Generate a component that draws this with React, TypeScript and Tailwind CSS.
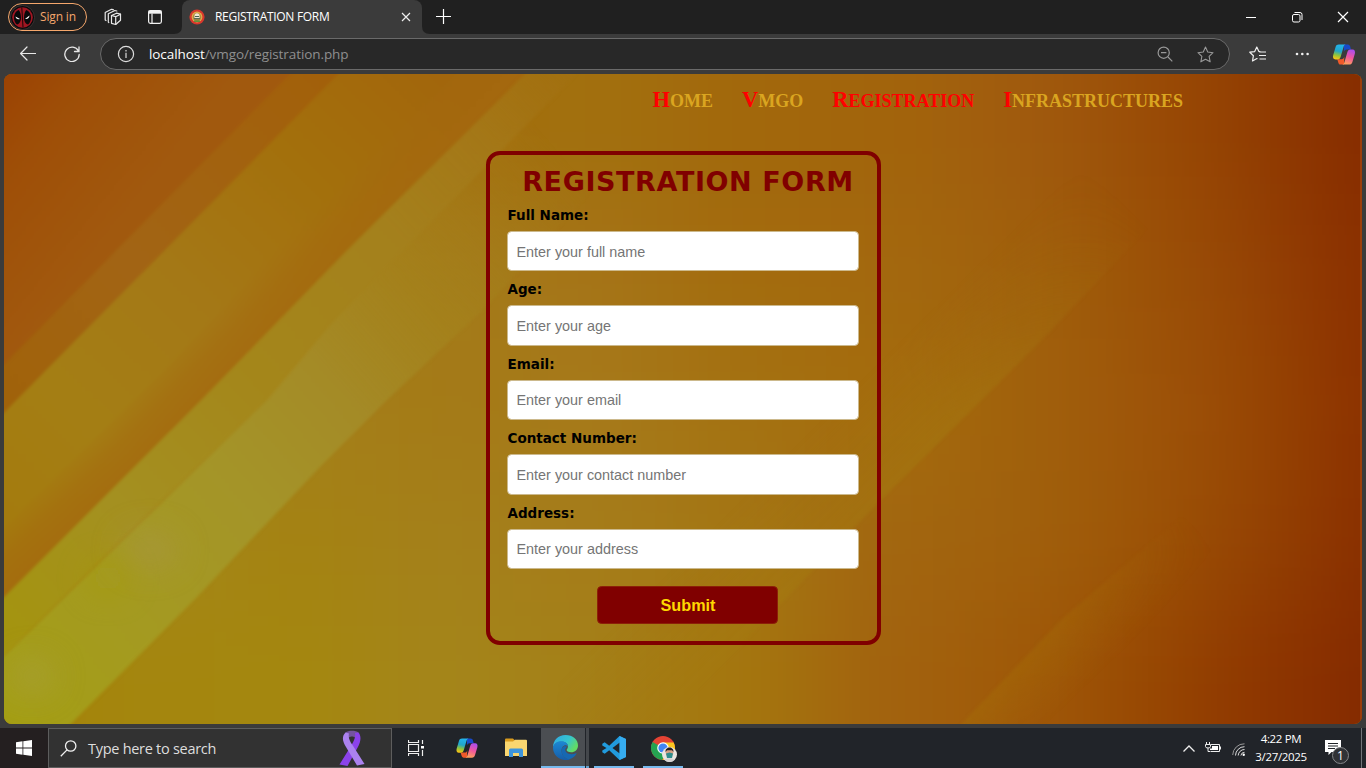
import React from "react";

const columns = [0, 140, 290, 440, 590, 740, 890, 1040, 1150, 1240, 1320, 1400];
const meshRows = [
  ["#9b4204", "#a0560a", "#a4660c", "#a36e0c", "#a2700e", "#a2680c", "#a2640c", "#a05a0e", "#9a4c06", "#934002", "#8a3200", "#842800"],
  ["#9e4c06", "#a26a10", "#a47612", "#a47c1a", "#a57418", "#a36c0e", "#a3680e", "#a0600c", "#9c5206", "#964606", "#8f3600", "#882c00"],
  ["#a2700e", "#a47e16", "#a4801c", "#a47a16", "#a67a1a", "#a47212", "#a46c0c", "#a0600c", "#9e540a", "#994a04", "#923a00", "#882c00"],
  ["#a38812", "#a4881c", "#a48212", "#a4801a", "#a57c1a", "#a47614", "#a26610", "#a0600c", "#9d5406", "#964604", "#8f3800", "#862a00"],
  ["#a38208", "#a4860e", "#a4870f", "#a4851a", "#a48018", "#a4760e", "#a2620e", "#9f5808", "#984802", "#8f3800", "#8a3000", "#802600"],
];

function Backdrop() {
  return (
    <svg className="absolute inset-0 h-full w-full" viewBox="4 74 1358 650" preserveAspectRatio="none">
      <defs>
        <filter id="mesh" x="-20%" y="-20%" width="140%" height="140%" colorInterpolationFilters="sRGB"><feGaussianBlur stdDeviation="50" /></filter>
        <filter id="soft" x="-5%" y="-5%" width="110%" height="110%" colorInterpolationFilters="sRGB"><feGaussianBlur stdDeviation="1.600" /></filter>
        <filter id="glow" x="-100%" y="-100%" width="300%" height="300%"><feGaussianBlur stdDeviation="16" /></filter>
        <linearGradient id="corner" gradientUnits="userSpaceOnUse" x1="4" y1="74" x2="150" y2="190">
          <stop stopColor="#9b4203" /><stop offset=".35" stopColor="#9e4e07" /><stop offset="1" stopColor="#a1590e" />
        </linearGradient>
        <linearGradient id="bandB" gradientUnits="userSpaceOnUse" x1="0" y1="390" x2="320" y2="74">
          <stop stopColor="#a0620a" /><stop offset=".4" stopColor="#a26414" /><stop offset="1" stopColor="#a2600a" />
        </linearGradient>
        <linearGradient id="bandC" gradientUnits="userSpaceOnUse" x1="0" y1="560" x2="450" y2="90">
          <stop stopColor="#a47a0c" /><stop offset=".25" stopColor="#a47e14" /><stop offset=".5" stopColor="#a47816" /><stop offset=".75" stopColor="#a3700c" /><stop offset="1" stopColor="#a2660c" />
        </linearGradient>
        <linearGradient id="rim" gradientUnits="userSpaceOnUse" x1="300" y1="301" x2="262" y2="263">
          <stop stopColor="#a4680e" stopOpacity=".75" /><stop offset=".5" stopColor="#a4680e" stopOpacity=".5" /><stop offset="1" stopColor="#a46a10" stopOpacity="0" />
        </linearGradient>
        <linearGradient id="bandD" gradientUnits="userSpaceOnUse" x1="0" y1="640" x2="640" y2="50">
          <stop stopColor="#a4940e" /><stop offset=".2" stopColor="#a49020" /><stop offset=".42" stopColor="#a4861a" /><stop offset=".65" stopColor="#a4801c" /><stop offset=".8" stopColor="#a47818" stopOpacity=".9" /><stop offset="1" stopColor="#a26c0e" stopOpacity=".2" />
        </linearGradient>
        <linearGradient id="bandE" gradientUnits="userSpaceOnUse" x1="0" y1="720" x2="600" y2="200">
          <stop stopColor="#a49e14" /><stop offset=".2" stopColor="#a49a20" /><stop offset=".42" stopColor="#a49428" /><stop offset=".6" stopColor="#a48a26" /><stop offset=".75" stopColor="#a4821c" stopOpacity=".8" /><stop offset="1" stopColor="#a47a1a" stopOpacity="0" />
        </linearGradient>
        <linearGradient id="crease" gradientUnits="userSpaceOnUse" x1="1040" y1="342" x2="970" y2="272">
          <stop stopColor="#a47a10" stopOpacity=".5" /><stop offset="1" stopColor="#a47812" stopOpacity="0" />
        </linearGradient>
        <linearGradient id="creaseFade" gradientUnits="userSpaceOnUse" x1="660" y1="724" x2="1150" y2="228">
          <stop stopColor="#fff" /><stop offset=".6" stopColor="#fff" /><stop offset="1" stopColor="#000" />
        </linearGradient>
        <mask id="creaseMask"><rect width="1366" height="768" fill="url(#creaseFade)" /></mask>
        <linearGradient id="ray" gradientUnits="userSpaceOnUse" x1="1020" y1="664" x2="1062" y2="708">
          <stop stopColor="#a46c08" stopOpacity=".55" /><stop offset="1" stopColor="#a46808" stopOpacity="0" />
        </linearGradient>
        <linearGradient id="rayFade" gradientUnits="userSpaceOnUse" x1="960" y1="724" x2="1190" y2="520">
          <stop stopColor="#fff" /><stop offset=".4" stopColor="#bbb" /><stop offset="1" stopColor="#000" />
        </linearGradient>
        <mask id="rayMask"><rect width="1366" height="768" fill="url(#rayFade)" /></mask>
      </defs>
      <rect x="0" y="70" width="1370" height="660" fill="#a06a10" />
      <g filter="url(#mesh)">
        {meshRows.map((row, r) =>
          row.map((fill, c) => {
            const left = c === 0 ? -200 : (columns[c - 1] + columns[c]) / 2;
            const right = c === 11 ? 1600 : (columns[c] + columns[c + 1]) / 2;
            const top = r === 0 ? -100 : 80 + r * 130;
            return <rect key={`${r}-${c}`} x={left} y={top} width={right - left + 1} height={r === 4 ? 400 : r === 0 ? 311 : 131} fill={fill} />;
          })
        )}
      </g>
      <g filter="url(#soft)">
        <polygon points="-20,680 267,400 330,325 586,50 720,50 486,307 387,400 320,467 197,597 40,755 -20,755" fill="url(#bandE)" />
        <polygon points="-20,621 203,398 350,247 549,50 600,50 330,325 267,400 110,550 -20,680" fill="url(#bandD)" />
        <polygon points="-20,421 143,272 362,50 549,50 350,247 203,398 -20,621" fill="url(#bandC)" />
        <polygon points="-20,551 165,370 310,215 475,50 549,50 350,247 203,398 -20,621" fill="url(#rim)" />
        <polygon points="-20,389 143,223 314,50 362,50 143,272 -20,437" fill="url(#bandB)" />
        <polygon points="-20,389 143,223 314,50 -20,50" fill="url(#corner)" />
        <polygon points="650,736 740,646 880,501 1040,342 1147,229 1250,130 1100,130 560,670 560,736" fill="url(#crease)" mask="url(#creaseMask)" />
        <polygon points="950,736 1063,618 1180,518 1230,530 1050,736" fill="url(#ray)" mask="url(#rayMask)" />
      </g>
      <ellipse cx="150" cy="550" rx="28" ry="18" fill="#a8964a" opacity=".55" filter="url(#glow)" />
      <ellipse cx="32" cy="676" rx="22" ry="18" fill="#a8a040" opacity=".6" filter="url(#glow)" />
      <ellipse cx="108" cy="578" rx="20" ry="16" fill="#a49a08" opacity=".6" filter="url(#glow)" />
      <rect x="1360" y="74" width="2" height="650" fill="#a64a12" opacity=".6" />
    </svg>
  );
}

function CopilotIcon({ className }: { className: string }) {
  return (
    <svg className={className} viewBox="0 0 24 24">
      <defs>
        <linearGradient id="cpA" x1=".5" y1="0" x2=".3" y2="1"><stop stopColor="#23b4ee" /><stop offset=".45" stopColor="#22a6c8" /><stop offset=".72" stopColor="#8fc43c" /><stop offset="1" stopColor="#ffc513" /></linearGradient>
        <linearGradient id="cpB" x1=".7" y1="0" x2=".4" y2="1"><stop stopColor="#a94df0" /><stop offset=".5" stopColor="#f0569e" /><stop offset="1" stopColor="#ffa05a" /></linearGradient>
      </defs>
      <path d="M12 1.500h4c1.400 0 2 .8 2.400 2l.9 3.200h-4.400c-2 0-2.500 1-3 2.600z" fill="#1749c9" />
      <path d="M12 22.500H8.500c-1.400 0-2-.8-2.400-2L5 17h4.300c2 0 2.500-1 3-2.600z" fill="#f05a2a" />
      <path d="M6.600 1.500h7.400c-1.500 0-2.100 1.300-2.500 2.600L8.600 14c-.6 2-1.400 3.200-3.300 3.200H3.200C.8 17.200.1 15 .7 12.800L3.300 4c.5-1.700 1.500-2.500 3.300-2.500z" fill="url(#cpA)" />
      <path d="M17.400 22.500H10c1.500 0 2.100-1.300 2.500-2.600l2.900-9.900c.6-2 1.400-3.200 3.300-3.200h2.100c2.400 0 3.100 2.200 2.500 4.400L20.700 20c-.5 1.700-1.500 2.500-3.300 2.500z" fill="url(#cpB)" />
    </svg>
  );
}

function TitleBar() {
  return (
    <div className="flex h-[34px] items-stretch bg-[#202020] text-white">
      <div className="ml-2 mt-[3px] flex h-7 w-[79px] items-center rounded-full border border-[#f5a76c] text-[#f5a76c]">
        <svg className="ml-[1px] h-[25px] w-[25px]" viewBox="0 0 25 25">
          <circle cx="12.500" cy="12.500" r="12" fill="#0a0a0c" stroke="#4a4040" strokeWidth=".7" />
          <circle cx="12.500" cy="12.500" r="10.300" fill="#a01622" />
          <path d="M8.800 5C10.500 7 11 10 11 13s-1.500 6-4 6.500C5 18 4 15.500 4 12.500 4 9 6 6 8.800 5zM16.200 5C14.500 7 14 10 14 13s1.500 6 4 6.500c2-1.500 3-4 3-7 0-3.500-2-6.500-4.800-7.500z" fill="#09090b" />
          <path d="M11.300 2.500l1-.2 1.200 20-1 .2z" fill="#180808" />
          <path d="M5.500 11.500l4.500 2.400c-2.300.8-4 .1-4.500-2.400zM19.500 10.500L15 13.900c2.500.6 4.300-.8 4.500-3.400z" fill="#fff" />
        </svg>
        <span className="ml-[5px] whitespace-nowrap font-['Open_Sans',sans-serif] text-[12px] leading-4 tracking-[-0.15px]">Sign in</span>
      </div>
      <svg className="ml-[17px] mt-2 h-[18px] w-[18px]" viewBox="0 0 18 18" fill="none" stroke="#e8e8e8" strokeWidth="1.200" strokeLinejoin="round" strokeLinecap="round">
        <path d="M7.500 7.500l5-2.300 4 1v6l-4.800 4.300-4.200-1.200zM4.800 14.500l-.5-.4V5.800L10.800 2.500l2 .5M2 12.500l-.8-.5V4.500L7.500 1.300l1.800.4" />
        <path d="M7.500 7.500l4.200 1.200v7.800M11.700 8.700l4.800-2.500" />
      </svg>
      <svg className="ml-[25px] mt-[9px] h-4 w-4" viewBox="0 0 16 16" fill="none" stroke="#f2f2f2" strokeWidth="1.200">
        <rect x="1.600" y="1.600" width="12.800" height="12.800" rx="1.800" />
        <path d="M1.500 3.200h13" strokeWidth="3" />
        <path d="M5 4.500v10" />
      </svg>
      <svg className="ml-[11px] h-[34px] w-2" viewBox="0 0 8 34"><path d="M0 34q8 0 8-8v8z" fill="#3b3b3b" /></svg>
      <div className="flex w-[240px] items-center rounded-t-lg bg-[#3b3b3b] pl-2">
        <svg className="-ml-px h-4 w-4" viewBox="0 0 16 16">
          <circle cx="8" cy="8" r="7.600" fill="#d8382c" /><circle cx="8" cy="8" r="5.400" fill="#e4b04c" />
          <circle cx="8" cy="8" r="4.300" fill="#a98a45" /><path d="M5.500 6.800a2.500 2.500 0 015 0v2.500h-5z" fill="#f0e6d4" />
          <path d="M6 7.500h4M5 9.700h6" stroke="#466050" /><path d="M5 12.200h6" stroke="#5b8f3a" strokeWidth="1.500" />
        </svg>
        <span className="ml-[10px] w-[181px] whitespace-nowrap font-['Open_Sans',sans-serif] text-[12px] leading-4 tracking-[-0.3px]">REGISTRATION FORM</span>
        <svg className="ml-[5px] h-[10px] w-[10px]" viewBox="0 0 10 10" stroke="#eee" strokeWidth="1.200"><path d="M1 1l8 8M9 1L1 9" /></svg>
      </div>
      <svg className="h-[34px] w-2" viewBox="0 0 8 34"><path d="M8 34q-8 0-8-8v8z" fill="#3b3b3b" /></svg>
      <svg className="ml-[6px] mt-[9px] h-[15px] w-[15px]" viewBox="0 0 15 15" stroke="#fff" strokeWidth="1.200"><path d="M7.500 0v15M0 7.500h15" /></svg>
      <div className="ml-auto mr-[17px] flex items-center gap-[34px]">
        <svg className="h-3 w-3" viewBox="0 0 12 12" stroke="#fff"><path d="M1 6.500h10" /></svg>
        <svg className="h-3 w-3" viewBox="0 0 12 12" stroke="#fff" fill="none"><rect x="1.500" y="3.500" width="7.500" height="7.500" rx="1.500" /><path d="M3.500 1.500H9a2 2 0 012 2V9" /></svg>
        <svg className="h-3 w-3" viewBox="0 0 12 12" stroke="#fff" strokeWidth="1.200"><path d="M1 1l10 10M11 1L1 11" /></svg>
      </div>
    </div>
  );
}

const starPath = "M8 1l2.100 4.700 5 .6-3.700 3.500 1 5.100L8 12.400l-4.400 2.500 1-5.100L.9 6.300l5-.6z";

function AddressBar() {
  return (
    <div className="flex h-10 items-center bg-[#3b3b3b]">
      <svg className="ml-5 h-4 w-4" viewBox="0 0 16 16" fill="none" stroke="#e8e8e8" strokeWidth="1.200" strokeLinecap="round" strokeLinejoin="round"><path d="M15.500 7.500H.8M7 1L.6 7.500 7 14" /></svg>
      <svg className="ml-7 h-4 w-4" viewBox="0 0 16 16" fill="none" stroke="#e8e8e8" strokeWidth="1.300" strokeLinecap="round"><path d="M14.400 5A7.200 7.200 0 1015.200 8.500M15 1v4.500h-4.500" /></svg>
      <div className="ml-5 flex h-8 w-[1130px] items-center rounded-full border border-[#6a6a6a] bg-[#282828]">
        <svg className="ml-4 h-[18px] w-[18px]" viewBox="0 0 18 18" fill="none" stroke="#ddd" strokeWidth="1.200"><circle cx="9" cy="9" r="7.600" /><path d="M9 7.800V13M9 5v1.400" /></svg>
        <span className="ml-[14px] whitespace-nowrap font-['Open_Sans',sans-serif] text-[13.500px] leading-5 tracking-[-0.09px] text-[#8f8f8f]"><span className="text-white">localhost</span>/vmgo/registration.php</span>
        <svg className="ml-auto h-4 w-4" viewBox="0 0 16 16" fill="none" stroke="#999" strokeWidth="1.200"><circle cx="6.700" cy="6.700" r="5.600" /><path d="M4 6.700h5.400M11 11l4.300 4.300" /></svg>
        <svg className="ml-6 mr-[15px] h-[17px] w-[17px]" viewBox="0 0 16 16" fill="none" stroke="#999" strokeLinejoin="round"><path d={starPath} /></svg>
      </div>
      <svg className="ml-[19px] h-[17px] w-[17px]" viewBox="0 0 17 17" fill="none" stroke="#f0f0f0" strokeWidth="1.200" strokeLinejoin="round"><path d="M11.300 5.700L9.900 5.500 7.800 1 5.700 5.600.8 6.200 4.400 9.700l-.9 5.300 4.400-2.500.6.300M10 6h7M10 9.500h7M10.500 13H17" /></svg>
      <svg className="ml-7 h-4 w-4" viewBox="0 0 16 16" fill="#f0f0f0"><circle cx="3" cy="8" r="1.300" /><circle cx="8.300" cy="8" r="1.300" /><circle cx="13.600" cy="8" r="1.300" /></svg>
      <CopilotIcon className="ml-[22px] h-[23px] w-6" />
    </div>
  );
}

const fields = [
  ["Full Name:", "Enter your full name"],
  ["Age:", "Enter your age"],
  ["Email:", "Enter your email"],
  ["Contact Number:", "Enter your contact number"],
  ["Address:", "Enter your address"],
];

function NavLink({ initial, rest, active }: { initial: string; rest: string; active?: boolean }) {
  return (
    <a className={active ? "whitespace-nowrap text-[#ff0000]" : "whitespace-nowrap text-[#daa520]"}>
      <span className="text-[22.500px] text-[#ff0000]">{initial}</span>
      <span className="text-[25.200px] [font-variant:small-caps]">{rest}</span>
    </a>
  );
}

function Page() {
  return (
    <main className="relative mx-1 h-[650px] overflow-hidden rounded-lg">
      <Backdrop />
      <div className="relative">
        <nav className="flex h-[77px] items-start justify-end gap-[29px] pr-[179px] pt-[9px] font-['Liberation_Serif',serif] font-bold leading-8">
          <NavLink initial="H" rest="ome" />
          <NavLink initial="V" rest="mgo" />
          <NavLink initial="R" rest="egistration" active />
          <NavLink initial="I" rest="nfrastructures" />
        </nav>
        <form className="ml-[482px] h-[494px] w-[394.500px] rounded-[14px] border-4 border-[#800000] px-[17px] pt-[10px]">
          <h1 className="h-9 w-[362px] whitespace-nowrap text-center font-['DejaVu_Sans',sans-serif] text-[27px] font-bold leading-[34px] tracking-[0.6px] text-[#800000]">REGISTRATION FORM</h1>
          {fields.map(([label, hint]) => (
            <div key={label} className="h-[74.400px] pt-[5px]">
              <label className="block h-[25px] whitespace-nowrap pl-[0.500px] font-['DejaVu_Sans',sans-serif] text-[13.500px] font-bold leading-[18px] text-black">{label}</label>
              <input className="block h-[40.400px] w-[352px] rounded-[4.500px] border border-[#ccb98c] bg-white px-[8.500px] pt-px font-['Liberation_Sans',sans-serif] text-[14.400px] placeholder:text-[#757575]" placeholder={hint} />
            </div>
          ))}
          <button type="button" className="ml-[90px] mt-[13px] block h-[38px] w-[181px] rounded-[4.500px] border border-[#8c2008] bg-[#800000] pl-px font-['Liberation_Sans',sans-serif] text-[16.200px] font-bold text-[#ffd700]">Submit</button>
        </form>
      </div>
    </main>
  );
}

function Taskbar() {
  return (
    <footer className="flex h-10 items-stretch bg-[#212429] text-white">
      <div className="flex w-12 items-center justify-center bg-[#241f20]">
        <svg className="h-4 w-4" viewBox="0 0 16 16" fill="#fff"><path d="M0 2.200L6.500 1.300v6.300H0zM7.300 1.200L16 0v7.600H7.300zM0 8.400h6.500v6.300L0 13.800zM7.300 8.400H16V16l-8.700-1.200z" /></svg>
      </div>
      <div className="flex w-[344px] items-center border border-[#5d5d5d] bg-[#323232]">
        <svg className="ml-[11px] h-[17px] w-[17px]" viewBox="0 0 17 17" fill="none" stroke="#f0f0f0" strokeWidth="1.300"><circle cx="10.700" cy="6" r="5.200" /><path d="M7 9.900L.8 16.200" /></svg>
        <span className="ml-[11px] mt-px whitespace-nowrap font-['Open_Sans',sans-serif] text-[14.500px] leading-5 tracking-[-0.28px] text-[#dedede]">Type here to search</span>
        <svg className="ml-auto mr-[26px] h-9 w-[26px]" viewBox="0 0 26 36">
          <path d="M6.500 2.500C9 .2 17 .2 19.500 2.500l-3 5.500c-1.500-2-5.500-2-7 0z" fill="#74549f" />
          <path d="M19.500 2.500c3 3.500 2.400 9-.6 14.500L8.500 36 .5 34.500 12 16c2.500-4 5-8.500 4-13z" fill="#8b42ea" />
          <path d="M6.500 2.500c-4 4-3 9 .5 14.500l11 18.500 7.500-1.500L13.500 15C10.500 11 9 7 10 3.500z" fill="#ab82ef" />
        </svg>
      </div>
      <svg className="ml-4 mt-3 h-4 w-4" viewBox="0 0 16 16" fill="none" stroke="#eee"><path d="M.5 0v2.500h10V0M.5 4.500h10v7H.5zM.5 16v-2.500h10V16M14.500 0v4M14.500 10v6" strokeWidth="1.200" /><path d="M13 6h3v2.500h-3z" fill="#fff" stroke="none" /></svg>
      <CopilotIcon className="ml-8 mt-[9px] h-[22px] w-[22px]" />
      <svg className="ml-[27px] mt-[10px] h-[19px] w-[22px]" viewBox="0 0 22 19">
        <path d="M0 1.500Q0 .5 1 .5h7l2 2v3H0z" fill="#d99b1e" /><path d="M0 3.500h8l2-1.800h11q1 0 1 1V18H0z" fill="#f9d670" />
        <path d="M4 19v-7q0-1.500 1.500-1.500h11Q18 10.500 18 12v7h-4v-4H8v4z" fill="#3e95dc" />
      </svg>
      <div className="ml-[14px] flex w-12">
        <div className="flex w-11 flex-col items-center border-b-2 border-[#76b9ed] bg-[#4b4e52]">
          <svg className="ml-1 mt-[7px] h-[25px] w-[25px]" viewBox="0 0 24 24">
            <defs><linearGradient id="eg" x2="1" y2=".5"><stop stopColor="#31a7e3" /><stop offset=".6" stopColor="#35c4d0" /><stop offset="1" stopColor="#62dc65" /></linearGradient><linearGradient id="eb" x2="0" y2="1"><stop stopColor="#1d88d3" /><stop offset="1" stopColor="#155da8" /></linearGradient></defs>
            <path d="M0 12C0 5 5 0 12 0s12 4.500 12 10c0 4-3 6.500-6.500 6.500-3 0-4.400-1-4.400-2.100 0-.8 1.200-1.200 1.200-3.400 0-2.500-2.300-4.500-6-4.500C4.500 6.500 1 8.500 0 12z" fill="url(#eg)" />
            <path d="M0 12c.6-3.500 3.600-6 7.500-6 4 0 6.500 2 6.800 4.500C11 8.500 8.200 11.400 8.200 15c0 4.200 3.300 8 8.200 8.300C14.800 24 13.500 24 12 24 5 24 0 18.500 0 12z" fill="url(#eb)" />
            <path d="M11 10.500c-1.800 1-2.800 2.500-2.800 4.700 0 4 3.200 7.700 7.300 8.100 3-.8 5.500-2.700 7-5.300.3-.5 0-.7-.4-.5-5.500 2.500-10.400 0-10.400-3.500 0-1.400 1.500-1.800 1.700-3z" fill="#1668b2" />
          </svg>
        </div>
        <div className="ml-px w-[3px] border-b-2 border-[#65a1ce] bg-[#44474b]" />
      </div>
      <div className="ml-[5px] flex w-10 justify-center border-b-2 border-[#76b9ed]">
        <svg className="mt-[8px] h-6 w-6" viewBox="0 0 24 24"><path d="M17.500 0L24 3v18l-6.500 3L7.200 14.200 2.700 17.700.3 16.300V14.500L4.500 12 .3 9.500V7.700L2.700 6.300l4.500 3.500zM17.700 6.500L10.500 12l7.200 5.500z" fill="#219bdd" fillRule="evenodd" /><path d="M17.500 0L24 3v18l-6.500 3z" fill="#36adf0" /></svg>
      </div>
      <div className="ml-[9px] flex w-10 justify-center border-b-2 border-[#76b9ed]">
        <svg className="ml-px mt-[8px] h-[26px] w-[26px]" viewBox="0 0 26 26">
          <circle cx="12" cy="12" r="12" fill="#e44334" /><path d="M12 12L1.600 6A12 12 0 0011 24l6-9z" fill="#25a351" /><path d="M12 6.500h10.700A12 12 0 0111.500 24L17 15z" fill="#fcc720" />
          <circle cx="12" cy="12" r="5.800" fill="#fff" /><circle cx="12" cy="12" r="4.600" fill="#4285f4" />
          <circle cx="18.500" cy="18.500" r="7.500" fill="#ece6e1" /><circle cx="18.500" cy="16.500" r="3.800" fill="#d9a184" /><path d="M14.500 16c-.4-6 8.500-6 8 0l-1.500-1.700h-5z" fill="#221b1d" /><path d="M15 17.500l3.500-1 3.500 1-1 4.500h-5z" fill="#318d8c" /><path d="M13.500 24c2-2.500 8-2.500 10 0a7.500 7.500 0 01-10 0z" fill="#d5d2d2" />
        </svg>
      </div>
      <div className="ml-auto flex items-start">
        <svg className="mt-4 h-[9px] w-3" viewBox="0 0 12 9" fill="none" stroke="#eee" strokeWidth="1.300"><path d="M.5 7.500L6 2l5.500 5.500" /></svg>
        <svg className="ml-[10px] mt-[14px] h-3 w-4" viewBox="0 0 16 12" fill="none" stroke="#eee"><path d="M6 2.500h8.500v7H5.500M15.500 4.500v3M1.500 0v2.500M4.500 0v2.500M.5 2.500h5v2q0 1.500-2.500 1.500T.5 4.500zM3 6v3.500h2" /><path d="M7 4h6v4H5V6.500h2z" fill="#fff" stroke="none" /></svg>
        <svg className="ml-[11px] mt-[15px] h-[13px] w-[13px]" viewBox="0 0 13 13" fill="none" stroke="#ddd"><path d="M.7 12A11.500 11.500 0 0112.500.8" stroke="#999" /><path d="M3.500 12.500A9 9 0 0112.500 3.700M6.200 12.500A6.300 6.300 0 0112.500 6.500M8.900 12.500a3.700 3.700 0 013.600-3.200" /><circle cx="11.700" cy="11.700" r="1.200" fill="#fff" stroke="none" /></svg>
        <div className="ml-2 mt-[2px] w-[56px] whitespace-nowrap text-center font-['Open_Sans',sans-serif] text-[11.500px] leading-[18px] tracking-[-0.35px]"><div>4:22 PM</div><div>3/27/2025</div></div>
        <div className="relative ml-4 mt-3 h-[26px] w-[26px]">
          <svg className="h-4 w-4" viewBox="0 0 16 16"><path d="M0 0h16v12H6.500L3.500 15v-3H0z" fill="#fff" /><path d="M3 3.500h10M3 6h10M3 8.500h7" stroke="#212429" /></svg>
          <span className="absolute left-[7px] top-[7px] flex h-[17px] w-[17px] items-center justify-center rounded-full border border-[#85878a] bg-[#303236] font-['Open_Sans',sans-serif] text-[12px] leading-none">1</span>
        </div>
        <div className="ml-[10px] mr-1 h-10 w-px bg-[#717478]" />
      </div>
    </footer>
  );
}

export default function App() {
  return (
    <div className="flex h-[768px] w-[1366px] flex-col overflow-hidden bg-[#3b3b3b]">
      <TitleBar />
      <AddressBar />
      <Page />
      <div className="h-1" />
      <Taskbar />
    </div>
  );
}
